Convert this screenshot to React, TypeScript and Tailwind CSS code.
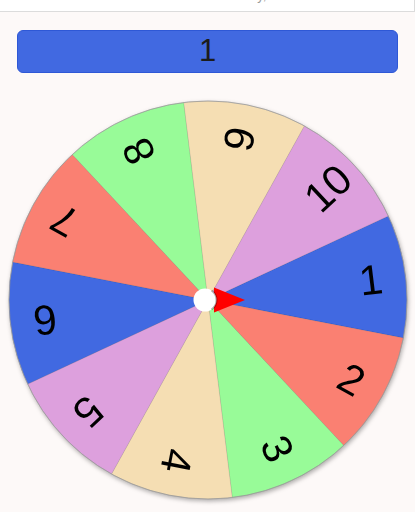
import React from 'react';

const COLORS = ['#4169e1', '#fa8072', '#98fb98', '#f5deb3', '#dda0dd'];
const CX = 200;
const CY = 200;
const R = 199;
const START = -25;

function pt(angle: number, r: number) {
    const a = (angle * Math.PI) / 180;
    return [CX + r * Math.cos(a), CY + r * Math.sin(a)];
}

function Wheel() {
    const segments = Array.from({ length: 10 }, (_, i) => {
        const a0 = START + i * 36;
        const a1 = a0 + 36;
        const [x0, y0] = pt(a0, R);
        const [x1, y1] = pt(a1, R);
        const mid = a0 + 18;
        const [tx, ty] = pt(mid, 164);
        return (
            <g key={i}>
                <path
                    d={`M${CX},${CY} L${x0},${y0} A${R},${R} 0 0 1 ${x1},${y1} Z`}
                    fill={COLORS[i % 5]}
                    stroke="rgba(0,0,0,0.12)"
                    strokeWidth="0.6"
                />
                <text
                    x={tx}
                    y={ty}
                    transform={`rotate(${mid} ${tx} ${ty})`}
                    textAnchor="middle"
                    dominantBaseline="central"
                    fontSize="42"
                    fill="#000"
                    fontFamily="'Liberation Sans', Arial, sans-serif"
                >
                    {i + 1}
                </text>
            </g>
        );
    });

    return (
        <div className="relative w-[400px] h-[400px]">
            <svg
                width="400"
                height="400"
                viewBox="0 0 400 400"
                className="drop-shadow-[1px_2px_2px_rgba(0,0,0,0.3)]"
            >
                {segments}
                <circle cx={CX} cy={CY} r={R} fill="none" stroke="#9a9a9a" strokeWidth="0.8" />
                <polygon points="206,187.5 237,200 206,212.5" fill="#ff0000" />
                <circle cx="197" cy="200" r="11.5" fill="#ffffff" />
                <path d="M203.5,190.5 A11.5,11.5 0 0 1 203.5,209.5" fill="none" stroke="rgba(0,0,0,0.3)" strokeWidth="2" />
            </svg>
        </div>
    );
}

export default function App() {
    return (
        <div className="min-h-[512px] w-[415px] bg-[#fdf9f8] font-['Liberation_Sans',Arial,sans-serif]">
            <div className="h-[12px] bg-white border-b border-r border-[#dcdcdc] overflow-hidden">
                <div className="pl-[250px] -mt-[12px] text-[13px] text-[#999] leading-[16px]">ey,</div>
            </div>
            <div className="px-[17px] pt-[18px]">
                <div className="h-[43px] rounded-md bg-[#4169e1] border border-[#2e58d6] flex items-center justify-center text-[31px] text-[#1c1c1c]">
                    1
                </div>
            </div>
            <div className="flex justify-center pt-[27px] pl-[1px]">
                <Wheel />
            </div>
        </div>
    );
}
